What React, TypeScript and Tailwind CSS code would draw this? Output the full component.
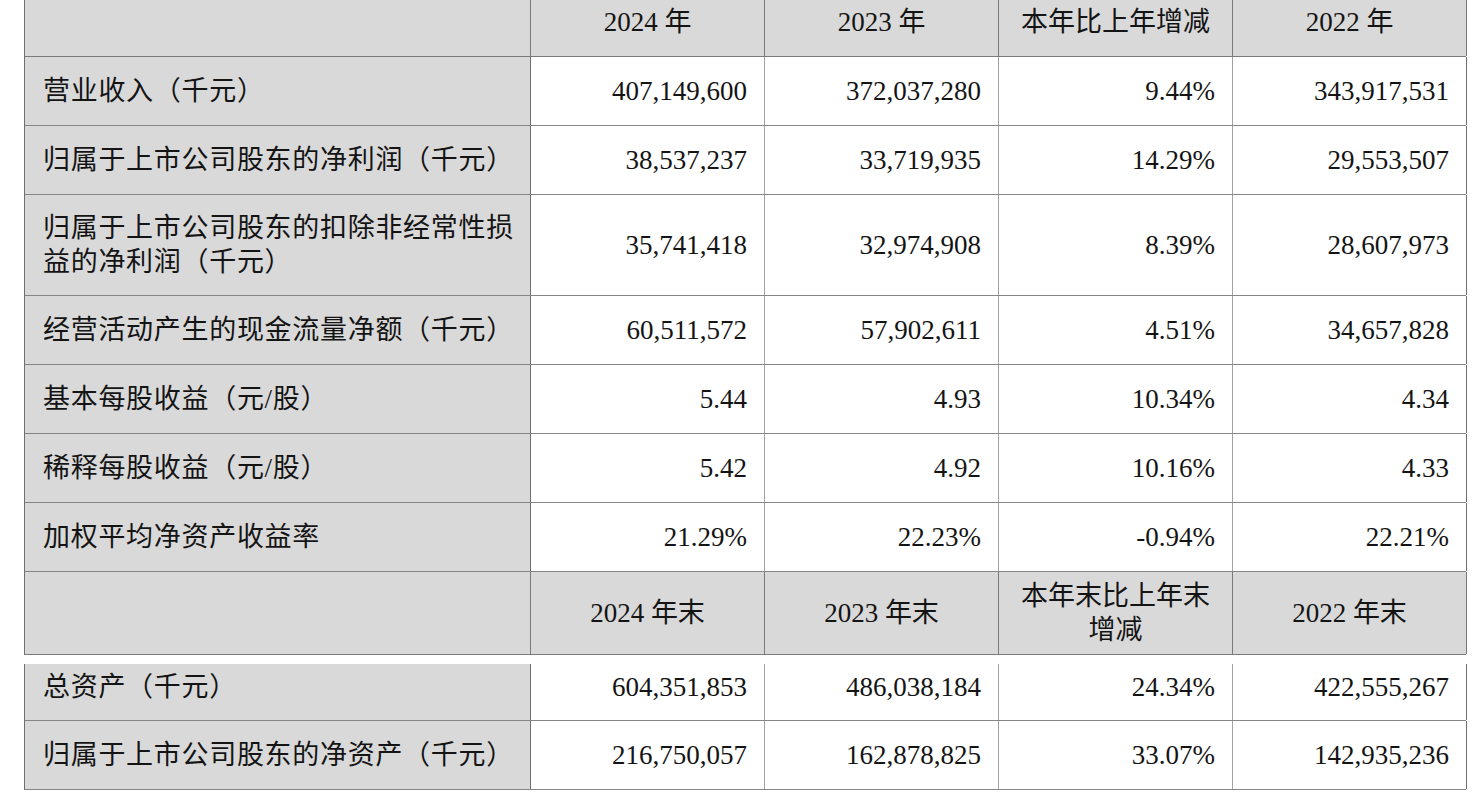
import React from "react";

const font = "font-['Liberation_Serif','Noto_Sans_CJK_SC',serif]";

type Row = { label: React.ReactNode; vals: string[]; h: string; pb?: string };

const rows1: Row[] = [
  { label: "营业收入（千元）", vals: ["407,149,600", "372,037,280", "9.44%", "343,917,531"], h: "h-[69px]" },
  { label: "归属于上市公司股东的净利润（千元）", vals: ["38,537,237", "33,719,935", "14.29%", "29,553,507"], h: "h-[69px]" },
  {
    label: (
      <>
        归属于上市公司股东的扣除非经常性损
        <br />
        益的净利润（千元）
      </>
    ),
    vals: ["35,741,418", "32,974,908", "8.39%", "28,607,973"],
    h: "h-[101px]",
  },
  { label: "经营活动产生的现金流量净额（千元）", vals: ["60,511,572", "57,902,611", "4.51%", "34,657,828"], h: "h-[69px]" },
  { label: "基本每股收益（元/股）", vals: ["5.44", "4.93", "10.34%", "4.34"], h: "h-[69px]" },
  { label: "稀释每股收益（元/股）", vals: ["5.42", "4.92", "10.16%", "4.33"], h: "h-[69px]" },
  { label: "加权平均净资产收益率", vals: ["21.29%", "22.23%", "-0.94%", "22.21%"], h: "h-[69px]" },
];

const grid = "grid grid-cols-[506px_234px_234px_234px_234px]";

function DataRow({ r }: { r: Row }) {
  return (
    <div className={`${grid} ${r.h} border-b border-[#858585]`}>
      <div className={`bg-[#d9d9d9] border-r border-[#6f6f6f] flex items-center pl-[18px] leading-[34px] tracking-[0.7px] ${r.pb ?? ""}`}>
        <span>{r.label}</span>
      </div>
      {r.vals.map((v, i) => (
        <div
          key={i}
          className={`bg-white flex items-center justify-end pr-[17px] ${r.pb ?? ""} ${
            i === 3 ? "border-r border-[#6f6f6f]" : "border-r border-[#a3a3a3]"
          }`}
        >
          {v}
        </div>
      ))}
    </div>
  );
}

export default function App() {
  return (
    <div className={`w-[1475px] h-[797px] overflow-hidden bg-white text-[27px] text-[#141414] ${font}`}>
      <div className="-mt-[13px] ml-[24px] w-[1442px]">
        <div className="border-l border-[#6f6f6f]">
          <div className={`${grid} h-[70px] border-t border-b border-[#7a7a7a] bg-[#d9d9d9]`}>
            <div className="border-r border-[#7a7a7a]" />
            {["2024 年", "2023 年", "本年比上年增减", "2022 年"].map((t) => (
              <div key={t} className="border-r border-[#7a7a7a] flex items-center justify-center">
                {t}
              </div>
            ))}
          </div>
          {rows1.map((r, i) => (
            <DataRow key={i} r={r} />
          ))}
          <div className={`${grid} h-[83px] border-b border-[#7a7a7a] bg-[#d9d9d9]`}>
            <div className="border-r border-[#7a7a7a]" />
            <div className="border-r border-[#7a7a7a] flex items-center justify-center">2024 年末</div>
            <div className="border-r border-[#7a7a7a] flex items-center justify-center">2023 年末</div>
            <div className="border-r border-[#7a7a7a] flex flex-col items-center justify-center leading-[34px]">
              <span>本年末比上年末</span>
              <span>增减</span>
            </div>
            <div className="border-r border-[#7a7a7a] flex items-center justify-center">2022 年末</div>
          </div>
        </div>
        <div className="h-[9px]" />
        <div className="border-l border-[#6f6f6f]">
          <DataRow
            r={{ label: "总资产（千元）", vals: ["604,351,853", "486,038,184", "24.34%", "422,555,267"], h: "h-[57px]", pb: "pb-[10px]" }}
          />
          <DataRow
            r={{ label: "归属于上市公司股东的净资产（千元）", vals: ["216,750,057", "162,878,825", "33.07%", "142,935,236"], h: "h-[69px]" }}
          />
        </div>
      </div>
    </div>
  );
}
